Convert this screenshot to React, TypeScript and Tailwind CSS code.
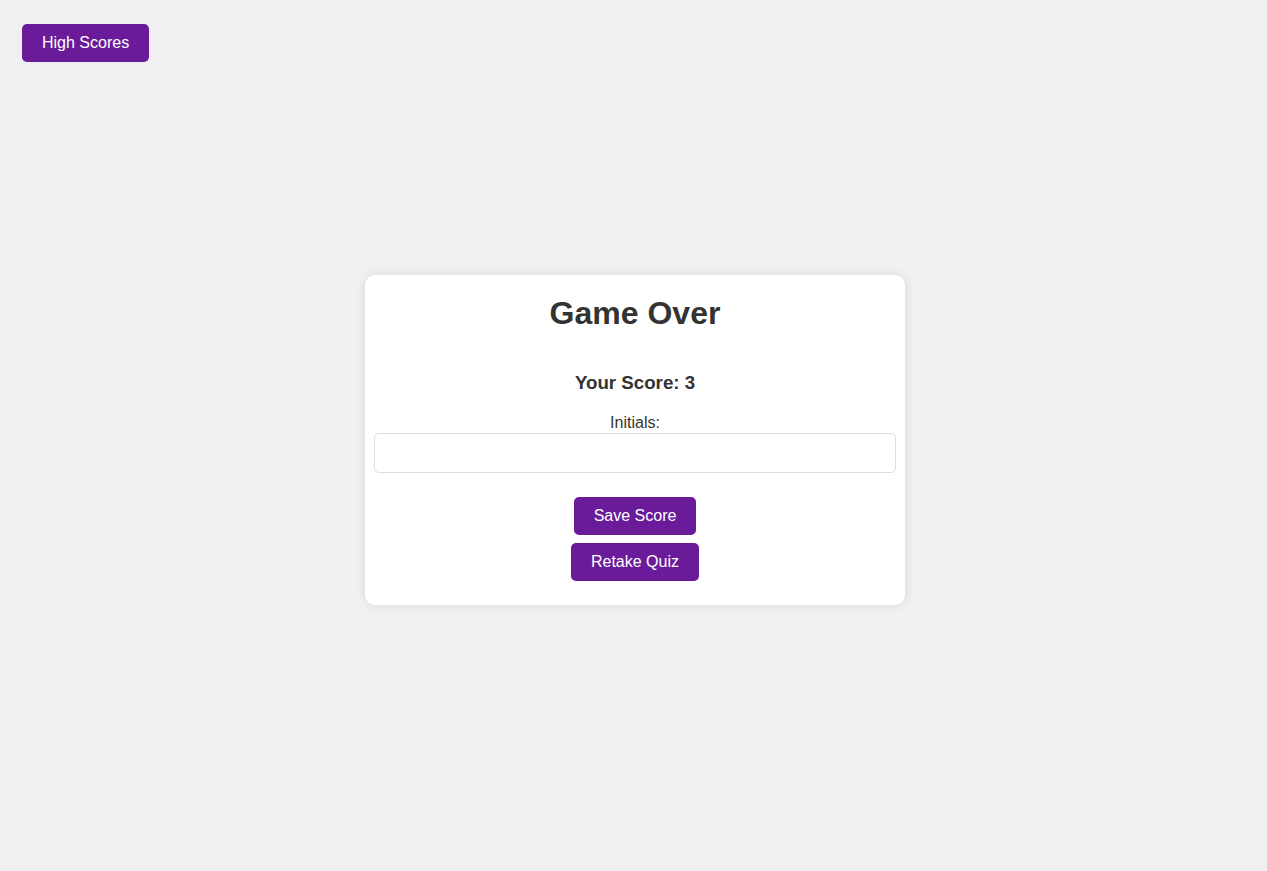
import React from "react";

export default function App() {
  return (
    <div
      className="relative min-h-screen w-full bg-[#f0f0f0] flex items-center justify-center text-[#333]"
      style={{ fontFamily: '"Liberation Sans", Arial, sans-serif' }}
    >
      <button className="absolute left-[22px] top-[24px] h-[38px] px-[20px] rounded-[5px] bg-[#6a1b9a] text-white text-[16px] leading-[18px]">
        High Scores
      </button>
      <div className="w-[540px] h-[330px] ml-[3px] mt-[9px] bg-white rounded-[10px] shadow-[0_0_10px_rgba(0,0,0,0.1)] px-[9px] pt-[20px] flex flex-col items-center">
        <h1 className="text-[32px] leading-[37px] font-bold m-0">Game Over</h1>
        <h2 className="mt-[40px] text-[18.72px] leading-[22px] font-bold">Your Score: 3</h2>
        <label className="mt-[20px] text-[16px] leading-[18px] block">Initials:</label>
        <input
          type="text"
          className="mt-[1px] w-full h-[40px] border border-[#ddd] rounded-[5px] px-[10px] text-[16px] outline-none"
        />
        <button className="mt-[24px] h-[38px] px-[20px] rounded-[5px] bg-[#6a1b9a] text-white text-[16px] leading-[18px]">
          Save Score
        </button>
        <button className="mt-[8px] h-[38px] px-[20px] rounded-[5px] bg-[#6a1b9a] text-white text-[16px] leading-[18px]">
          Retake Quiz
        </button>
      </div>
    </div>
  );
}
